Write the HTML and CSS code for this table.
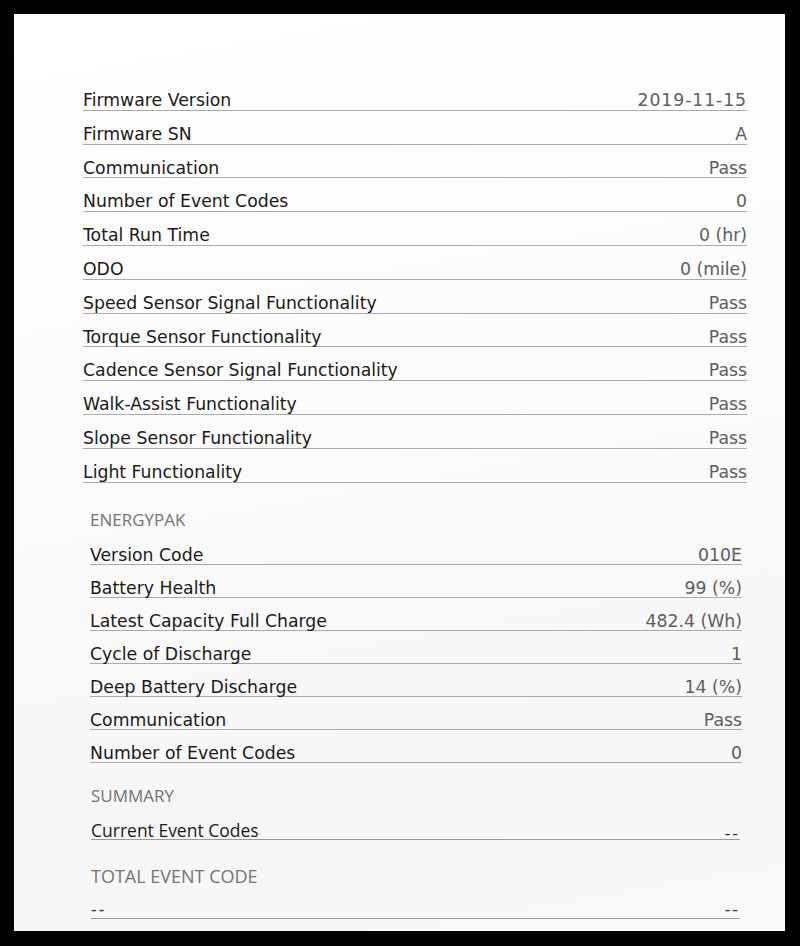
FILE: index.html
```html
<!DOCTYPE html>
<html lang="en">
<head>
<meta charset="utf-8">
<title>Diagnostic Report</title>
<link rel="stylesheet" href="styles.css">
</head>
<body>
<div class="paper">
  <section class="group group-main">
    <div class="row"><span class="label">Firmware Version</span><span class="value wide">2019-11-15</span></div>
    <div class="row"><span class="label">Firmware SN</span><span class="value">A</span></div>
    <div class="row"><span class="label">Communication</span><span class="value">Pass</span></div>
    <div class="row"><span class="label">Number of Event Codes</span><span class="value">0</span></div>
    <div class="row"><span class="label">Total Run Time</span><span class="value">0 (hr)</span></div>
    <div class="row"><span class="label">ODO</span><span class="value">0 (mile)</span></div>
    <div class="row"><span class="label">Speed Sensor Signal Functionality</span><span class="value">Pass</span></div>
    <div class="row"><span class="label">Torque Sensor Functionality</span><span class="value">Pass</span></div>
    <div class="row"><span class="label">Cadence Sensor Signal Functionality</span><span class="value">Pass</span></div>
    <div class="row"><span class="label">Walk-Assist Functionality</span><span class="value">Pass</span></div>
    <div class="row"><span class="label">Slope Sensor Functionality</span><span class="value">Pass</span></div>
    <div class="row"><span class="label">Light Functionality</span><span class="value">Pass</span></div>
  </section>

  <section class="group group-battery">
    <div class="heading">ENERGYPAK</div>
    <div class="row short"><span class="label">Version Code</span><span class="value">010E</span></div>
    <div class="row short"><span class="label">Battery Health</span><span class="value">99 (%)</span></div>
    <div class="row short"><span class="label">Latest Capacity Full Charge</span><span class="value">482.4 (Wh)</span></div>
    <div class="row short"><span class="label">Cycle of Discharge</span><span class="value">1</span></div>
    <div class="row short"><span class="label">Deep Battery Discharge</span><span class="value">14 (%)</span></div>
    <div class="row short"><span class="label">Communication</span><span class="value">Pass</span></div>
    <div class="row short"><span class="label">Number of Event Codes</span><span class="value">0</span></div>
  </section>

  <section class="group group-summary">
    <div class="heading summary-heading">SUMMARY</div>
    <div class="row short sans"><span class="label">Current Event Codes</span><span class="value dash">--</span></div>
    <div class="heading total-heading">TOTAL EVENT CODE</div>
    <div class="row short sans last"><span class="label dash">--</span><span class="value dash">--</span></div>
  </section>
</div>
</body>
</html>
```

FILE: styles.css
```css
html {
  background: #000;
}

body {
  margin: 0;
  background: #000;
  font-family: "DejaVu Sans", "Liberation Sans", sans-serif;
}

.paper {
  margin: 14px 15px 15px 14px;
  height: 917px;
  box-sizing: border-box;
  padding-top: 63px;
  background: linear-gradient(170deg, #ffffff 0%, #fbfbfb 45%, #f6f6f6 80%, #f9f9f9 100%);
  display: flex;
  flex-direction: column;
}

.group {
  display: flex;
  flex-direction: column;
}

.group-main {
  margin: 0 38px 0 69px;
}

.group-battery {
  margin: 0 43px 0 76px;
}

.group-summary {
  margin: 0 45px 0 77px;
}

.row {
  height: 33.8px;
  box-sizing: border-box;
  padding-top: 13px;
  display: flex;
  justify-content: space-between;
  align-items: flex-start;
  border-bottom: 1px solid #ababab;
  line-height: 20px;
  font-size: 17.3px;
}

.row.short {
  height: 33px;
}

.label {
  color: #1a1a1a;
}

.value {
  color: #5e5e5e;
}

.value.wide {
  letter-spacing: 0.9px;
}

.heading {
  font-family: "Open Sans", "Liberation Sans", sans-serif;
  color: #747474;
  font-size: 17px;
  line-height: 18px;
  padding-top: 28px;
  padding-bottom: 3px;
}

.summary-heading {
  padding-top: 24px;
  padding-bottom: 2px;
}

.total-heading {
  font-size: 18px;
  line-height: 20px;
  padding-top: 26px;
  padding-bottom: 0;
}

.sans {
  font-family: "Open Sans", "Liberation Sans", sans-serif;
  font-size: 17.5px;
  border-bottom-color: #9a9a9a;
}

.sans .dash {
  color: #333;
  padding-top: 3px;
  letter-spacing: 2px;
}

.row.last {
  padding-top: 10px;
}
```
